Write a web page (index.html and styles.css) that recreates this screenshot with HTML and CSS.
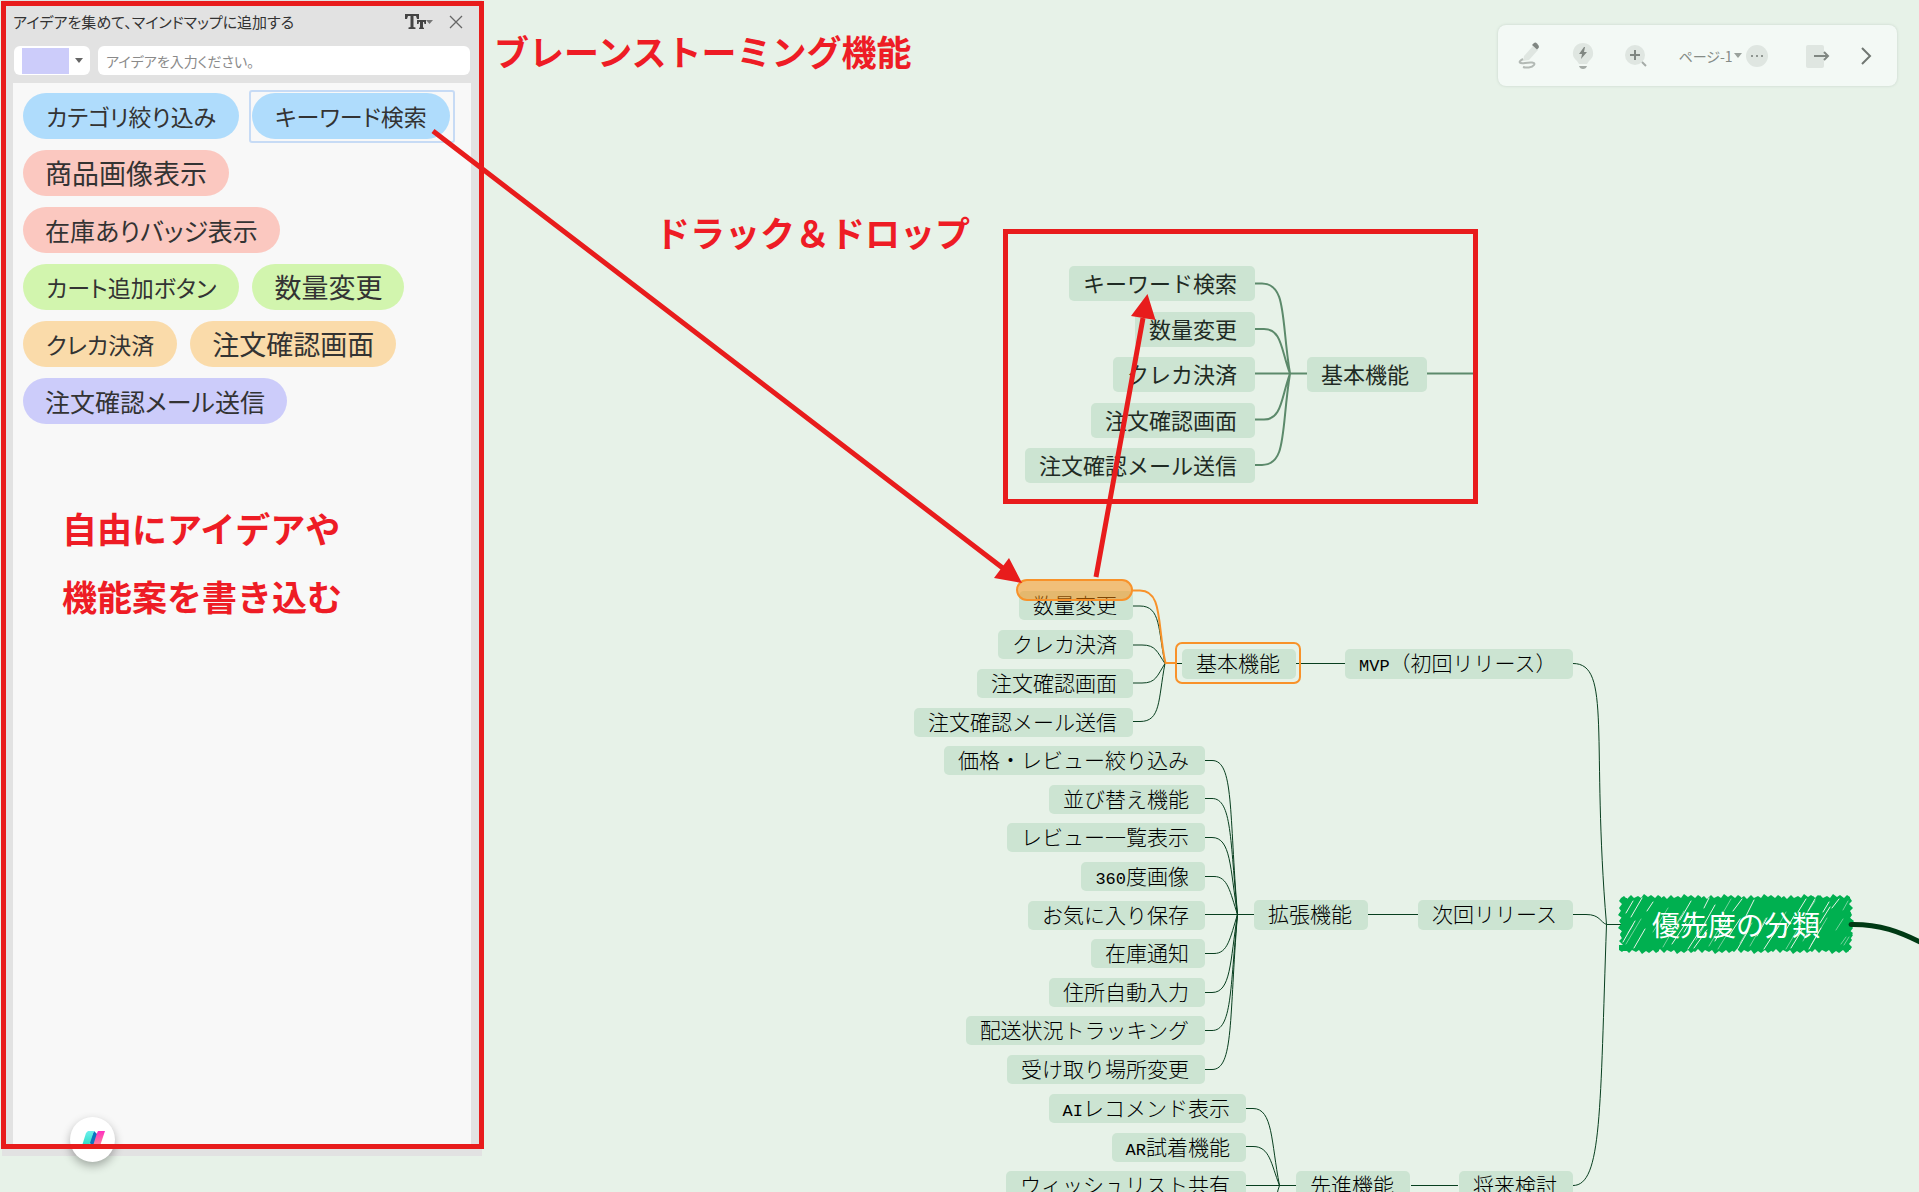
FILE: index.html
```html
<!DOCTYPE html>
<html lang="ja">
<head>
<meta charset="utf-8">
<title>マインドマップ - ブレーンストーミング</title>
<link rel="stylesheet" href="styles.css">
</head>
<body>
<main class="canvas">
  <svg class="layer" aria-hidden="true">
    <g class="links">
      <path d="M1133 606H1140C1161 606 1158 630 1165 663.5M1133 645H1142C1156 645 1157 652 1165 663.5M1133 683H1142C1156 683 1157 676 1165 663.5M1133 721.5H1140C1161 721.5 1158 700 1165 663.5H1182"/>
      <path d="M1296 663.5H1345"/>
      <path d="M1205 760.5H1212C1234 760.5 1229 812 1237.500 914.500M1205 798.500H1212C1232 798.500 1230 840 1237.500 914.500M1205 837.500H1212C1231 837.500 1230 868 1237.500 914.500M1205 876.500H1214C1228 876.500 1230 892 1237.500 914.500M1205 914.500H1254M1205 953.500H1214C1228 953.500 1230 938 1237.500 914.500M1205 992.500H1212C1231 992.500 1230 962 1237.500 914.500M1205 1030.500H1212C1232 1030.500 1230 990 1237.500 914.500M1205 1069.500H1212C1234 1069.500 1229 1018 1237.500 914.500"/>
      <path d="M1368 914.500H1418M1411 1185.500H1458"/>
      <path d="M1246 1108.500H1253C1273 1108.500 1271 1142 1279.500 1185.500M1246 1146.500H1253C1270 1146.500 1271 1164 1279.500 1185.500M1246 1185.500H1297M1279.500 1185.500C1277 1192 1277 1196 1276 1200"/>
      <path d="M1573 663.500C1612 663.500 1591 740 1606.500 924.500M1573 914.500H1586C1600 914.500 1600 922 1606.500 924.500H1622M1606.500 924.500C1600 1110 1602 1185.500 1573 1185.500"/>
      <path class="inset-link" d="M1255 283.500H1262C1287 283.500 1281 320 1290 373.500M1255 329H1264C1282 329 1281 350 1290 373.500M1255 373.500H1307M1255 419.500H1264C1282 419.500 1281 398 1290 373.500M1255 465H1262C1287 465 1281 430 1290 373.500M1427 373.500H1474"/>
    </g>
  </svg>

  <ul class="leaves leaves-inset">
    <li class="node">キーワード検索</li>
    <li class="node">数量変更</li>
    <li class="node">クレカ決済</li>
    <li class="node">注文確認画面</li>
    <li class="node">注文確認メール送信</li>
  </ul>
  <div class="node branch inset-branch">基本機能</div>

  <ul class="leaves leaves-basic">
    <li class="node">数量変更</li>
    <li class="node">クレカ決済</li>
    <li class="node">注文確認画面</li>
    <li class="node">注文確認メール送信</li>
  </ul>
  <div class="node branch basic">基本機能</div>
  <div class="node branch mvp"><span class="latin">MVP</span>（初回リリース）</div>

  <ul class="leaves leaves-extended">
    <li class="node">価格・レビュー絞り込み</li>
    <li class="node">並び替え機能</li>
    <li class="node">レビュー一覧表示</li>
    <li class="node"><span class="latin">360</span>度画像</li>
    <li class="node">お気に入り保存</li>
    <li class="node">在庫通知</li>
    <li class="node">住所自動入力</li>
    <li class="node">配送状況トラッキング</li>
    <li class="node">受け取り場所変更</li>
  </ul>
  <div class="node branch extended">拡張機能</div>
  <div class="node branch next">次回リリース</div>

  <ul class="leaves leaves-advanced">
    <li class="node"><span class="latin">AI</span>レコメンド表示</li>
    <li class="node"><span class="latin">AR</span>試着機能</li>
    <li class="node">ウィッシュリスト共有</li>
  </ul>
  <div class="node branch advanced">先進機能</div>
  <div class="node branch future">将来検討</div>

  <div class="root">
    <svg class="scribble" viewBox="0 0 236 60" aria-hidden="true">
      <defs><path id="edge" d="M0 9V4l3-2 3 3 4-4 3 3 4-2 3 2 3-4 4 3 3-2 4 3 3-3 3 2V9z"/></defs>
      <g fill="#00b050">
        <rect x="5" y="6" width="226" height="48"/>
        <use href="#edge" x="3"/><use href="#edge" x="43"/><use href="#edge" x="83"/><use href="#edge" x="123"/><use href="#edge" x="163"/><use href="#edge" x="192"/>
        <g transform="translate(0 60) scale(1 -1)"><use href="#edge" x="1"/><use href="#edge" x="36"/><use href="#edge" x="74"/><use href="#edge" x="113"/><use href="#edge" x="152"/><use href="#edge" x="191"/></g>
        <use href="#edge" transform="translate(0 44) rotate(-90)"/><use href="#edge" transform="translate(0 57) rotate(-90)"/>
        <use href="#edge" transform="translate(236 4) rotate(90)"/><use href="#edge" transform="translate(235 16) rotate(90)"/>
      </g>
      <g fill="none" stroke="#e7f2e8" stroke-width="1" stroke-linecap="round">
        <path d="M8 19L15 7M13 23L24 4M5 48L17 27M16 54L27 35M29 17L35 8M62 26L73 7M54 50L68 29M70 55L85 32M76 54L89 36M66 38L78 18M86 14L91 4M83 36L97 11M97 47L111 23M111 42L122 25M119 56L130 37M128 22L136 6M115 17L124 5M139 42L149 24M146 55L161 32M164 43L176 22M173 54L184 36M180 18L188 5M190 17L197 5M191 55L203 34M202 29L212 13M205 18L211 8M214 14L221 5"/>
      </g>
      <g fill="none" stroke="#e7f2e8" stroke-width="1" opacity=".5" stroke-linecap="round">
        <path d="M8 50L23 25M35 38L50 14M45 53L63 22M59 30L66 17M78 46L88 29M91 52L108 23M106 17L113 5M122 49L134 29M132 52L148 24M154 43L168 18M168 55L184 28M185 25L197 7M185 47L198 24M193 51L209 24M218 36L225 25M226 51L231 43M10 39L15 31M100 55L108 42M225 16L230 7M223 50L228 43"/>
      </g>
    </svg>
    <h1 class="root-label">優先度の分類</h1>
  </div>
  <svg class="layer" aria-hidden="true"><path class="trunk" d="M1851 924.500C1880 924 1900 932 1922 943"/></svg>

  <p class="note note-title">ブレーンストーミング機能</p>
  <p class="note note-drag">ドラック＆ドロップ</p>
</main>

<aside class="panel">
  <header class="panel-head">
    <h2 class="panel-title">アイデアを集めて、マインドマップに追加する</h2>
    <button class="icon-button" type="button" aria-label="文字サイズ">
      <svg width="30" height="18" viewBox="0 0 30 18"><path fill="#444" d="M1 1h14v5h-2L12 3H9.500v11l2 .5V16h-7v-1.500l2-.5V3H4L3 6H1zM13 7h9v4h-1.500L20 9h-1v5.500l1 .3V16h-5v-1.200l1-.3V9h-1l-.5 2H13z"/><path fill="#777" d="M22 7h7l-3.500 4z"/></svg>
    </button>
    <button class="icon-button" type="button" aria-label="閉じる">
      <svg width="16" height="16" viewBox="0 0 16 16"><path d="M2 2l12 12M14 2L2 14" stroke="#666" stroke-width="1.300"/></svg>
    </button>
  </header>
  <form class="idea-form">
    <button class="color-button" type="button" aria-label="色"><span class="swatch"></span><svg width="8" height="5" viewBox="0 0 8 5"><path d="M0 0h8L4 5z" fill="#666"/></svg></button>
    <input class="idea-input" type="text" aria-label="アイデア" placeholder="アイデアを入力ください。">
  </form>
  <section class="ideas">
    <ul class="chips">
      <li class="chip kana blue">カテゴリ絞り込み</li>
      <li class="chip kana blue selected">キーワード検索</li>
      <li class="chip kanji red">商品画像表示</li>
      <li class="chip red">在庫ありバッジ表示</li>
      <li class="chip kana green">カート追加ボタン</li>
      <li class="chip kanji green">数量変更</li>
      <li class="chip kana orange">クレカ決済</li>
      <li class="chip kanji orange">注文確認画面</li>
      <li class="chip violet">注文確認メール送信</li>
    </ul>
    <p class="note note-free">自由にアイデアや<br>機能案を書き込む</p>
  </section>
</aside>

<nav class="toolbar" aria-label="ツールバー">
  <button class="tool" type="button" aria-label="ブラシ"><svg width="24" height="28" viewBox="0 0 24 28"><path d="M6 14L15 4l5 4-9 10-6 1z" fill="#dfe6e1"/><path d="M14 3l2-2q1.500-1 3 .5l1.500 2q1 1.500 0 2.500L19 7.500z" fill="#808782"/><path d="M5 17c-6 3-3 5 2 4s11-1 9 2-8 3-11 2" fill="none" stroke="#b3bab5" stroke-width="2"/></svg></button>
  <button class="tool" type="button" aria-label="ひらめき"><svg width="22" height="28" viewBox="0 0 22 28"><path d="M11 1a10 10 0 0 1 6 18l-2 3H7l-2-3A10 10 0 0 1 11 1z" fill="#dfe6e1"/><path d="M12 5l-5 7h3l-1 5 6-7h-3l1-5z" fill="#808782"/><path d="M7 24h8q-1 3-4 3t-4-3z" fill="#a4aba6"/></svg></button>
  <button class="tool" type="button" aria-label="拡大"><svg width="24" height="26" viewBox="0 0 24 26"><circle cx="11" cy="12" r="10" fill="#dfe6e1"/><path d="M11 7v10M6 12h10" stroke="#808782" stroke-width="2"/><path d="M18 19l4 4" stroke="#a4aba6" stroke-width="2"/></svg></button>
  <div class="page-group">
    <button class="page-button" type="button">ページ-1<svg width="8" height="5" viewBox="0 0 8 5"><path d="M0 0h8L4 5z" fill="#9aa19c"/></svg></button>
    <button class="tool" type="button" aria-label="その他"><svg width="22" height="22" viewBox="0 0 22 22"><circle cx="11" cy="11" r="11" fill="#dfe6e1"/><path d="M5 10h2v2H5zM10 10h2v2h-2zM15 10h2v2h-2z" fill="#8f9691"/></svg></button>
  </div>
  <button class="tool" type="button" aria-label="書き出し"><svg width="24" height="24" viewBox="0 0 24 24"><rect x="0" y="1" width="18" height="23" rx="2" fill="#dfe6e1"/><path d="M8 12h14M18 8l4 4-4 4" fill="none" stroke="#808782" stroke-width="2"/></svg></button>
  <button class="tool" type="button" aria-label="次へ"><svg width="12" height="18" viewBox="0 0 12 18"><path d="M2 1l8 8-8 8" fill="none" stroke="#707772" stroke-width="2"/></svg></button>
</nav>

<button class="assistant" type="button" aria-label="アシスタント"><svg width="26" height="20" viewBox="0 0 26 20"><defs><linearGradient id="teal" x2="0" y2="1"><stop stop-color="#6cf0ee"/><stop offset="1" stop-color="#1fd6b8"/></linearGradient><linearGradient id="pink" x2="0" y2="1"><stop stop-color="#ff2fc0"/><stop offset="1" stop-color="#ff9a90"/></linearGradient></defs><path d="M14 1l4 4-4 13-5-6z" fill="#0b74c0"/><path d="M8 1h6L8 19H1L6 3z" fill="url(#teal)"/><path d="M18 1h7l-6 18h-7l5-16z" fill="url(#pink)"/></svg></button>

<svg class="layer marks" aria-hidden="true">
  <rect x="1017" y="580" width="115" height="20" rx="10" fill="#fb8c0a" fill-opacity=".5" stroke="#f8922a" stroke-width="2"/>
  <path d="M1132 590.500H1140C1163 590.500 1157 625 1165.500 663H1175" fill="none" stroke="#f8922a" stroke-width="2"/>
  <rect x="1176" y="643" width="124" height="40" rx="6" fill="none" stroke="#f8922a" stroke-width="2"/>
  <g fill="none" stroke="#e81c1c" stroke-width="5">
    <rect x="3.500" y="3.500" width="478" height="1143"/>
    <rect x="1005.500" y="231.500" width="470" height="270"/>
    <path d="M433 131L1004 569M1096 577L1143 318"/>
  </g>
  <path d="M1022 583L994 578L1009 558zM1147.500 294L1155.500 320L1131 316z" fill="#e81c1c"/>
</svg>
</body>
</html>
```
FILE: styles.css
```css
* { box-sizing: border-box; }

body {
  margin: 0;
  min-height: 100vh;
  overflow: hidden;
  position: relative;
  background: #e7f2e8;
  color: #333;
  font-family: "Noto Sans CJK JP", sans-serif;
}

ul { list-style: none; margin: 0; padding: 0; }
h1, h2, p { margin: 0; }

button {
  border: 0;
  padding: 0;
  background: none;
  font: inherit;
  color: inherit;
  display: flex;
  align-items: center;
  justify-content: center;
}

.canvas { position: absolute; inset: 0; overflow: hidden; }
.layer { position: absolute; inset: 0; width: 100%; height: 100%; overflow: hidden; }
.marks { pointer-events: none; }
.links { fill: none; stroke: #083f1f; stroke-width: 1; }
.inset-link { stroke: #5c8a6b; stroke-width: 2; }
.trunk { fill: none; stroke: #003a14; stroke-width: 5; stroke-linecap: round; }

/* mind map nodes */
.leaves {
  position: absolute;
  display: flex;
  flex-direction: column;
  align-items: flex-end;
  justify-content: space-between;
}
.node {
  height: 29px;
  padding: 0 16px 0 14px;
  border-radius: 5px;
  background: #cce4d2;
  color: #000;
  font-size: 21px;
  font-weight: 300;
  line-height: 27px;
  white-space: nowrap;
}
.latin { font-family: "Liberation Mono", monospace; font-size: 17px; font-weight: 400; }
.branch { position: absolute; height: 30px; }
.leaves-basic { left: 915px; top: 591px; width: 218px; height: 146px; }
.leaves-extended { left: 946px; top: 746px; width: 259px; height: 338px; }
.leaves-advanced { left: 1008px; top: 1094px; width: 238px; height: 106px; }
.basic { left: 1182px; top: 649px; }
.mvp { left: 1345px; top: 649px; width: 228px; }
.extended { left: 1254px; top: 900px; }
.next { left: 1418px; top: 900px; }
.advanced { left: 1296px; top: 1171px; }
.future { left: 1459px; top: 1171px; }
.leaves-inset { left: 1025px; top: 266px; width: 230px; height: 217px; }
.leaves-inset .node, .inset-branch {
  height: 35px;
  padding: 0 18px 0 14px;
  font-size: 22px;
  font-weight: 400;
  line-height: 33px;
  color: #1f2b24;
}
.inset-branch { left: 1307px; top: 357px; }

.root {
  position: absolute;
  left: 1618px;
  top: 894px;
  width: 236px;
  height: 60px;
  display: grid;
  place-items: center;
}
.scribble { position: absolute; inset: 0; }
.root-label { position: relative; color: #fff; font-size: 28px; font-weight: 400; line-height: 32px; }

/* red annotations */
.note { color: #ee1c25; font-size: 35px; font-weight: 700; line-height: 52px; white-space: nowrap; }
.note-title { position: absolute; left: 494px; top: 25px; }
.note-drag { position: absolute; left: 655px; top: 206px; }
.note-free { padding: 70px 0 0 39px; line-height: 68px; }

/* brainstorming panel */
.panel {
  position: relative;
  display: flex;
  flex-direction: column;
  width: 480px;
  height: calc(100vh - 36px);
  margin-left: 2px;
  padding: 6px 11px 12px;
  background: #e2e2e2;
}
.panel-head { display: flex; align-items: center; height: 31px; gap: 14px; padding-right: 7px; }
.panel-title {
  flex: 1;
  font-size: 15px;
  font-weight: 400;
  font-feature-settings: "palt";
  white-space: nowrap;
}
.idea-form { display: flex; gap: 8px; padding: 9px 1px 8px; }
.color-button { width: 76px; height: 29px; gap: 6px; border-radius: 6px; background: #fff; }
.swatch { width: 47px; height: 26px; background: #ccccfa; }
.idea-input {
  flex: 1;
  min-width: 0;
  height: 29px;
  padding: 0 8px;
  border: 0;
  border-radius: 6px;
  background: #fff;
  font-family: inherit;
  font-size: 14px;
  font-feature-settings: "palt";
}
.idea-input::placeholder { color: #8a8a8a; }
.ideas { flex: 1; background: #f8f8f8; padding: 10px 0 0 10px; }
.chips { display: flex; flex-wrap: wrap; gap: 11px 13px; }
.chip {
  height: 46px;
  padding: 0 22px;
  border-radius: 23px;
  font-size: 25px;
  font-weight: 400;
  line-height: 46px;
  font-feature-settings: "palt";
  white-space: nowrap;
}
.kana { padding: 0 23px; font-size: 23px; }
.kanji { font-size: 27px; }
.blue { background: #afdcfc; }
.red { background: #fbc8c0; }
.green { background: #d2f5ae; }
.orange { background: #fadbaa; }
.violet { background: #ccccfa; }
.selected { position: relative; }
.selected::after {
  content: "";
  position: absolute;
  inset: -3px -5px -4px -3px;
  border: 2px solid #c7dbf5;
  border-radius: 3px;
}

/* floating controls */
.toolbar {
  position: absolute;
  top: 25px;
  right: 22px;
  display: flex;
  align-items: center;
  justify-content: space-between;
  width: 399px;
  height: 61px;
  padding: 0 25px 0 20px;
  border-radius: 8px;
  background: #f3f9f5;
  box-shadow: 0 0 3px #c5d3c9;
}
.page-group { display: flex; align-items: center; gap: 4px; margin-right: 8px; }
.page-button { gap: 1px; font-size: 14px; font-feature-settings: "palt"; color: #858c87; }
.assistant {
  position: absolute;
  left: 70px;
  top: calc(100vh - 75px);
  width: 45px;
  height: 45px;
  border-radius: 50%;
  background: #fff;
  box-shadow: 0 4px 10px rgba(0, 0, 0, .3);
}
```
